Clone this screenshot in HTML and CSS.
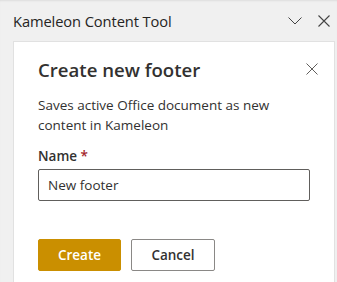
FILE: index.html
```html
<!DOCTYPE html>
<html>
<head>
<meta charset="utf-8">
<link rel="stylesheet" href="styles.css">
</head>
<body>
<div class="pane">
  <header class="pane-header">
    <span class="pane-title">Kameleon Content Tool</span>
    <div class="pane-actions">
      <button class="icon-btn" aria-label="Collapse">
        <svg width="14" height="8" viewBox="0 0 14 8"><path d="M0.5 0.5 L7 7 L13.5 0.5" fill="none" stroke="#444" stroke-width="1"/></svg>
      </button>
      <button class="icon-btn" aria-label="Close">
        <svg width="12" height="12" viewBox="0 0 12 12"><path d="M0.5 0.5 L11.5 11.5 M11.5 0.5 L0.5 11.5" fill="none" stroke="#444" stroke-width="1.1"/></svg>
      </button>
    </div>
  </header>
  <section class="card">
    <div class="card-head">
      <h1 class="card-title">Create new footer</h1>
      <button class="icon-btn close" aria-label="Close dialog">
        <svg width="12" height="12" viewBox="0 0 12 12"><path d="M0.5 0.5 L11.5 11.5 M11.5 0.5 L0.5 11.5" fill="none" stroke="#605e5c" stroke-width="1"/></svg>
      </button>
    </div>
    <p class="desc">Saves active Office document as new content in Kameleon</p>
    <label class="field-label">Name <span class="req">*</span></label>
    <input class="text-input" type="text" value="New footer">
    <div class="actions">
      <button class="btn primary">Create</button>
      <button class="btn secondary">Cancel</button>
    </div>
  </section>
</div>
</body>
</html>
```

FILE: styles.css
```css
html, body {
  margin: 0;
  padding: 0;
  height: 100%;
  overflow: hidden;
}
body {
  background: #f0f0f0;
  font-family: "Open Sans", "Noto Sans", sans-serif;
  color: #323130;
}
.pane {
  box-shadow: inset 0 2px 2px -1px rgba(0,0,0,0.08);
  height: 100%;
  overflow: hidden;
}
.pane-header {
  height: 41px;
  display: flex;
  align-items: center;
  padding: 0 7px 0 13px;
}
.pane-title {
  flex: 1;
  font-size: 14.7px;
  color: #252423;
  letter-spacing: -0.1px;
}
.pane-actions {
  display: flex;
  gap: 16px;
  align-items: center;
}
.icon-btn {
  background: none;
  border: none;
  padding: 0;
  display: flex;
  align-items: center;
  justify-content: center;
}
.card {
  margin: 0 2px 0 13px;
  background: #fff;
  border: 1px solid #e1e1e1;
  padding: 13px 16px 20px 24px;
  min-height: 260px;
}
.card-head {
  display: flex;
  align-items: center;
  justify-content: space-between;
  height: 28px;
}
.card-title {
  margin: 0;
  font-size: 18.6px;
  font-weight: 600;
  color: #323130;
}
.desc {
  margin: 12px 8px 0 0;
  font-size: 13.5px;
  line-height: 20px;
  color: #323130;
}
.field-label {
  display: block;
  margin-top: 11px;
  font-size: 13.5px;
  font-weight: 600;
  line-height: 20px;
}
.req {
  color: #a4262c;
}
.text-input {
  display: block;
  box-sizing: border-box;
  width: 272px;
  height: 32px;
  margin-top: 3px;
  border: 1px solid #605e5c;
  border-radius: 2px;
  padding: 0 9px;
  font-family: inherit;
  font-size: 13.5px;
  color: #323130;
}
.actions {
  display: flex;
  gap: 10px;
  margin-top: 38px;
}
.btn {
  box-sizing: border-box;
  height: 32px;
  border-radius: 2px;
  font-family: inherit;
  font-size: 13.5px;
  font-weight: 600;
  padding: 0;
}
.primary {
  width: 83px;
  background: #ca8f00;
  border: 1px solid #ca8f00;
  color: #fff;
}
.secondary {
  width: 84px;
  background: #fff;
  border: 1px solid #8a8886;
  color: #323130;
}
```
